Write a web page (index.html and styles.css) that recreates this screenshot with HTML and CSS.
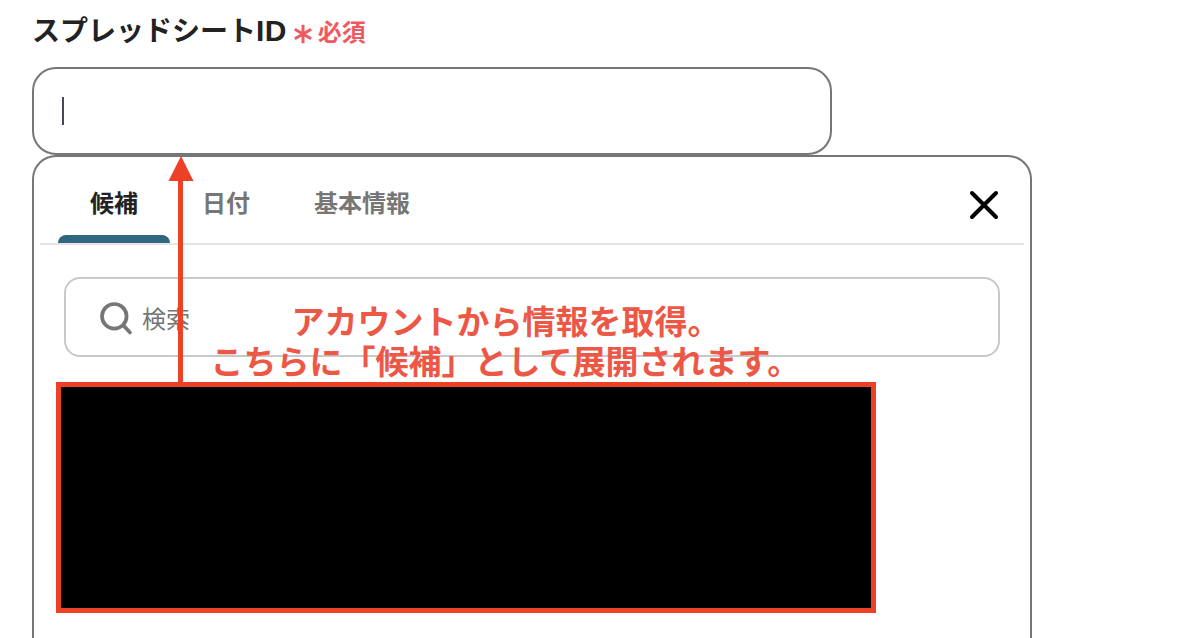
FILE: index.html
```html
<!DOCTYPE html>
<html lang="ja">
<head>
<meta charset="utf-8">
<title>スプレッドシートID</title>
<link rel="stylesheet" href="styles.css">
</head>
<body>
<main class="field">
  <label class="field-label">
    <span class="name">スプレッドシート<span class="latin">ID</span></span>
    <span class="required"><svg class="asterisk" viewBox="0 0 18 20"><path d="M9 .7v18.600M.8 5.300l16.400 9.400M17.200 5.300L.8 14.700"/></svg>必須</span>
  </label>
  <div class="text-input"><span class="caret"></span></div>
  <section class="panel">
    <header class="panel-header">
      <nav class="tabs">
        <span class="tab active">候補</span>
        <span class="tab">日付</span>
        <span class="tab">基本情報</span>
      </nav>
      <svg class="close" viewBox="0 0 30 30"><path d="M3 3l24 24M27 3L3 27"/></svg>
    </header>
    <div class="search">
      <svg class="search-icon" viewBox="0 0 34 34"><circle cx="15.300" cy="14.300" r="12.300"/><path d="M24 23l7 7.500" stroke-linecap="round"/></svg>
      <span class="placeholder">検索</span>
    </div>
    <div class="redacted"></div>
  </section>
</main>
<svg class="arrow" viewBox="0 0 26 230"><path d="M13 0l12.500 25H15v201h-5V25H.5z"/></svg>
<p class="note"><span class="note-first">アカウントから情報を取得。</span><span class="note-second">こちらに「候補」として展開されます。</span></p>
</body>
</html>
```

FILE: styles.css
```css
* { box-sizing: border-box; }
body {
  margin: 0;
  height: 638px;
  position: relative;
  overflow: hidden;
  background: #fff;
  color: #222;
  font-family: "Noto Sans CJK JP", sans-serif;
}
svg { display: block; fill: none; }
.field { width: 1000px; margin-left: 32px; }
.field-label {
  display: flex;
  height: 67px;
  padding-top: 9px;
  gap: 7px;
  font-weight: 700;
  line-height: 40px;
}
.name { font-size: 28px; white-space: nowrap; }
.latin { font-family: "Liberation Sans", sans-serif; font-size: 30px; letter-spacing: 0.4px; }
.required { display: flex; height: 44px; gap: 6px; color: #ef5a60; font-size: 24px; line-height: 43px; }
.asterisk { width: 18px; height: 20px; margin-top: 15px; stroke: #ef5a60; stroke-width: 3; }
.text-input {
  width: 800px;
  height: 88px;
  padding: 28px;
  border: 2px solid #767676;
  border-radius: 24px;
}
.caret { display: block; width: 2px; height: 28px; background: #434957; }
.panel {
  height: 483px;
  border: 2px solid #767676;
  border-bottom: 0;
  border-radius: 24px 24px 0 0;
}
.panel-header {
  display: flex;
  justify-content: space-between;
  height: 88px;
  margin: 0 6px;
  padding: 0 25px 0 18px;
  border-bottom: 2px solid #e5e5e5;
}
.tabs { display: flex; height: 86px; color: #767676; font-size: 24px; font-weight: 700; line-height: 90px; }
.tab { padding: 0 32px; white-space: nowrap; }
.active { color: #222; position: relative; }
.active::after {
  content: "";
  position: absolute;
  left: 0;
  right: 0;
  bottom: 0;
  height: 8px;
  border-radius: 8px 8px 0 0;
  background: #2f6780;
}
.close { width: 30px; height: 30px; margin-top: 33px; stroke: #000; stroke-width: 4; stroke-linecap: round; }
.search {
  display: flex;
  align-items: center;
  width: 936px;
  height: 80px;
  margin: 32px 0 25px 30px;
  padding-left: 33px;
  gap: 9px;
  border: 2px solid #c8c8c8;
  border-radius: 16px;
}
.search-icon { width: 34px; height: 34px; margin-top: 3px; stroke: #767676; stroke-width: 3.7; }
.placeholder { color: #767676; font-size: 24px; line-height: 36px; margin-top: 2px; }
.redacted { width: 820px; height: 231px; margin-left: 22px; border: 5px solid #ec4127; background: #000; }
.arrow { position: absolute; left: 168px; top: 156px; width: 26px; height: 230px; fill: #ec4127; }
.note {
  position: absolute;
  left: 210.500px;
  top: 300px;
  margin: 0;
  display: flex;
  flex-direction: column;
  color: #ed5746;
  font-size: 33px;
  font-weight: 700;
  line-height: 40px;
  white-space: nowrap;
}
.note-first { padding-left: 81px; }
```
